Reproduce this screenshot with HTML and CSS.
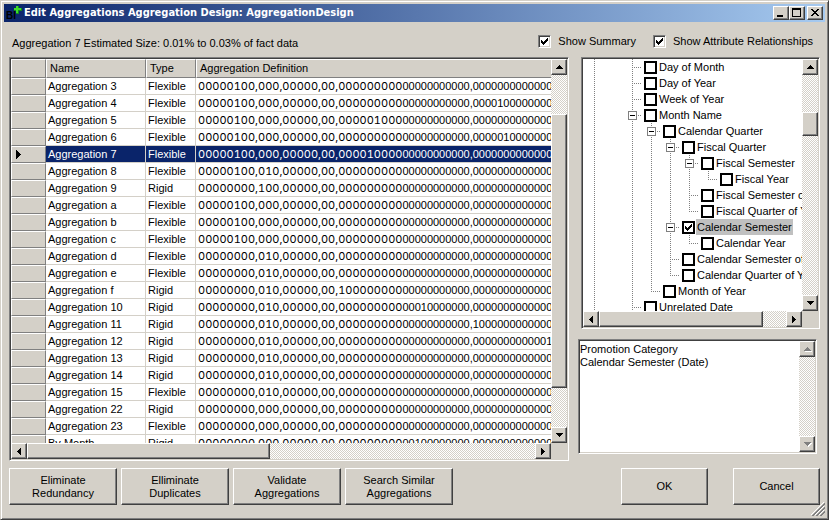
FILE: index.html
```html
<!DOCTYPE html>
<html lang="en">
<head>
<meta charset="utf-8">
<title>Edit Aggregations</title>
<link rel="stylesheet" href="styles.css">
</head>
<body>
<svg class="defs" aria-hidden="true">
  <symbol id="up" viewBox="0 0 7 4"><path d="M3 0h1v1h1v1h1v1h1v1H0V3h1V2h1V1h1z"/></symbol>
  <symbol id="down" viewBox="0 0 7 4"><path d="M0 0h7v1H6v1H5v1H4v1H3V3H2V2H1V1H0z"/></symbol>
  <symbol id="left" viewBox="0 0 4 7"><path d="M3 0h1v7H3V6H2V5H1V4H0V3h1V2h1V1h1z"/></symbol>
  <symbol id="right" viewBox="0 0 4 7"><path d="M0 0h1v1h1v1h1v1h1v1H3v1H2v1H1v1H0z"/></symbol>
  <symbol id="marker" viewBox="0 0 5 9"><path d="M0 0h1v1h1v1h1v1h1v1h1v1H4v1H3v1H2v1H1v1H0z"/></symbol>
</svg>
<div class="window">
  <header class="titlebar">
    <svg class="app-icon" viewBox="0 0 16 16" aria-hidden="true">
      <text x="0" y="14" class="app-letters">BI</text>
      <path d="M10 1h3v2h3v3h-3v3h-3V6H8V3h2z" fill="#128c1c"/>
      <path d="M10 1h2v2h3v2h-3v3h-2V5H8V3h2z" fill="#3fdc2c"/>
    </svg>
    <h1>Edit Aggregations Aggregation Design: AggregationDesign</h1>
    <div class="caption-buttons">
      <button class="cap" aria-label="Minimize"><svg viewBox="0 0 12 10"><path d="M2 7h6v2H2z"/></svg></button>
      <button class="cap" aria-label="Maximize"><svg viewBox="0 0 12 10"><path fill-rule="evenodd" d="M1 0h9v9H1zM2 2v6h7V2z"/></svg></button>
      <button class="cap close" aria-label="Close"><svg viewBox="0 0 12 10"><path d="M2 1h2v1h1v1h2V2h1V1h2v1H9v1H8v1H7v1h1v1h1v1h1v1H8V7H7V6H5v1H4v1H2V7h1V6h1V5h1V4H4V3H3V2H2z"/></svg></button>
    </div>
  </header>

  <div class="options">
    <p class="size">Aggregation 7 Estimated Size: 0.01% to 0.03% of fact data</p>
    <label class="option"><input type="checkbox" class="check" checked>Show Summary</label>
    <label class="option"><input type="checkbox" class="check" checked>Show Attribute Relationships</label>
  </div>

  <main class="main">
    <section class="panel grid-panel">
      <div class="view">
        <table class="grid">
          <colgroup><col class="c-mark"><col class="c-name"><col class="c-type"><col></colgroup>
          <thead><tr><th></th><th>Name</th><th>Type</th><th>Aggregation Definition</th></tr></thead>
          <tbody id="rows"></tbody>
        </table>
      </div>
      <div class="bar vertical">
        <button class="arrow" aria-label="Scroll up"><svg class="a-v"><use href="#up"/></svg></button>
        <div class="track grid-v"><div class="thumb"></div></div>
        <button class="arrow" aria-label="Scroll down"><svg class="a-v"><use href="#down"/></svg></button>
      </div>
      <div class="bar horizontal">
        <button class="arrow" aria-label="Scroll left"><svg class="a-h"><use href="#left"/></svg></button>
        <div class="track grid-h"><div class="thumb"></div></div>
        <button class="arrow" aria-label="Scroll right"><svg class="a-h"><use href="#right"/></svg></button>
      </div>
    </section>

    <div class="side">
      <section class="panel tree-panel">
        <div class="view"><ul class="tree" id="tree"></ul></div>
        <div class="bar vertical">
          <button class="arrow" aria-label="Scroll up"><svg class="a-v"><use href="#up"/></svg></button>
          <div class="track tree-v"><div class="thumb"></div></div>
          <button class="arrow" aria-label="Scroll down"><svg class="a-v"><use href="#down"/></svg></button>
        </div>
        <div class="bar horizontal">
          <button class="arrow" aria-label="Scroll left"><svg class="a-h"><use href="#left"/></svg></button>
          <div class="track tree-h"><div class="thumb"></div></div>
          <button class="arrow" aria-label="Scroll right"><svg class="a-h"><use href="#right"/></svg></button>
        </div>
      </section>
      <section class="panel summary-panel">
        <textarea class="summary" aria-label="Summary">Promotion Category
Calendar Semester (Date)</textarea>
        <div class="bar vertical">
          <button class="arrow" disabled aria-label="Scroll up"><svg class="a-v"><use href="#up"/></svg></button>
          <div class="track"></div>
          <button class="arrow" disabled aria-label="Scroll down"><svg class="a-v"><use href="#down"/></svg></button>
        </div>
      </section>
    </div>
  </main>

  <footer class="footer">
    <button class="button">Eliminate<br>Redundancy</button>
    <button class="button">Elliminate<br>Duplicates</button>
    <button class="button">Validate<br>Aggregations</button>
    <button class="button">Search Similar<br>Aggregations</button>
    <div class="confirm">
      <button class="button small">OK</button>
      <button class="button small">Cancel</button>
    </div>
  </footer>
  <svg class="grip" viewBox="0 0 14 14" aria-hidden="true">
    <path d="M0 13L13 0M4 13l9-9M8 13l5-5" stroke="#fff"/>
    <path d="M1 14L14 1M2 14L14 2M5 14l9-9M6 14l8-8M9 14l5-5M10 14l4-4" stroke="#808080"/>
  </svg>
</div>
<script src="script.js"></script>
</body>
</html>
```
FILE: styles.css
```css
* { box-sizing: border-box; }

:root {
  --face: #d4d0c8;
  --shadow: #808080;
  --dark: #404040;
  --navy: #0a246a;
}

body {
  margin: 0;
  background: var(--face);
  color: #000;
  font: 11px/13px "Liberation Sans", Arial, sans-serif;
}

button, textarea { font: inherit; color: inherit; }
svg { display: block; fill: #000; shape-rendering: crispEdges; }
.defs { position: absolute; width: 0; height: 0; }

.window {
  position: relative;
  display: flex;
  flex-direction: column;
  height: 100vh;
  padding: 2px;
  border: 1px solid;
  border-color: var(--face) var(--dark) var(--dark) var(--face);
  box-shadow: inset 1px 1px #fff, inset -1px -1px var(--shadow);
}

/* Title bar */
.titlebar {
  display: flex;
  align-items: center;
  flex: none;
  height: 18px;
  margin: 1px 1px 0;
  padding: 0 2px;
  background: linear-gradient(90deg, var(--navy), #a6caf0);
}
.app-icon { width: 16px; height: 16px; margin-right: 2px; }
.app-letters { font: bold 10px "Liberation Sans", sans-serif; fill: #000; }
.titlebar h1 {
  flex: 1;
  margin: 0;
  color: #fff;
  font: bold 11px/18px "DejaVu Sans Condensed", "DejaVu Sans", sans-serif;
  white-space: nowrap;
}
.caption-buttons { display: flex; }
.cap, .arrow, .thumb, .button {
  background: var(--face);
  border: 1px solid;
  border-color: #fff var(--dark) var(--dark) #fff;
  border-radius: 0;
  box-shadow: inset -1px -1px var(--shadow);
}
.cap { width: 16px; height: 14px; padding: 1px; }
.cap svg { width: 12px; height: 10px; }
.close { margin-left: 2px; }

/* Options row */
.options {
  display: flex;
  align-items: center;
  flex: none;
  height: 35px;
  padding: 4px 13px 0 9px;
}
.size { flex: 1; margin: 4px 0 0; }
.option { display: flex; align-items: center; height: 14px; margin-left: 17px; }
.check {
  appearance: none;
  width: 13px;
  height: 13px;
  margin: 0 7px 0 0;
  background: #fff;
  border: 1px solid;
  border-color: var(--shadow) #fff #fff var(--shadow);
  box-shadow: inset 1px 1px var(--dark), inset -1px -1px var(--face);
}
.check:checked, .node-check:checked {
  background: #fff url("data:image/svg+xml,%3Csvg xmlns='http://www.w3.org/2000/svg' viewBox='0 0 7 7' shape-rendering='crispEdges'%3E%3Cpath d='M0 2h1v1h1v1h1V3h1V2h1V1h1V0h1v3H6v1H5v1H4v1H3v1H2V6H1V5H0z'/%3E%3C/svg%3E") center / 7px 7px no-repeat;
}

/* Panels */
.main { display: flex; flex: 1; min-height: 0; gap: 9px; padding: 0 6px; }
.side { display: flex; flex-direction: column; flex: 0 0 242px; gap: 10px; }
.panel {
  display: grid;
  grid-template: minmax(0, 1fr) 16px / minmax(0, 1fr) 16px;
  padding: 1px;
  border: 1px solid;
  border-color: var(--shadow) #fff #fff var(--shadow);
  box-shadow: inset 1px 1px var(--dark), inset -1px -1px var(--face);
}
.grid-panel { flex: 1; min-width: 0; }
.tree-panel { flex: 1; min-height: 0; margin-left: 3px; }
.summary-panel {
  flex: none;
  height: 115px;
  margin: 0 3px 7px 0;
  grid-template-rows: minmax(0, 1fr);
}
.view { overflow: hidden; background: #fff; }

/* Scroll bars */
.bar { display: flex; }
.vertical { flex-direction: column; }
.track {
  display: flex;
  flex: 1;
  flex-direction: inherit;
  background: conic-gradient(#fff 25%, var(--face) 0 50%, #fff 0 75%, var(--face) 0) 0 0 / 2px 2px;
}
.track::before, .track::after { content: ""; flex: 0 1 0; }
.grid-v::before { flex-grow: 39; }
.grid-v .thumb { flex-grow: 274; }
.grid-v::after { flex-grow: 39; }
.grid-h .thumb { flex-grow: 242; }
.grid-h::after { flex-grow: 266; }
.tree-v::before { flex-grow: 38; }
.tree-v .thumb { flex-grow: 22; }
.tree-v::after { flex-grow: 161; }
.tree-h .thumb { flex-grow: 165; }
.tree-h::after { flex-grow: 23; }
.arrow {
  display: flex;
  align-items: center;
  justify-content: center;
  flex: none;
  width: 16px;
  height: 16px;
  padding: 0;
}
.arrow:disabled svg { fill: var(--shadow); filter: drop-shadow(1px 1px #fff); }
.a-v { width: 7px; height: 4px; }
.a-h { width: 4px; height: 7px; }
.row-marker { width: 5px; height: 9px; }

/* Aggregation table */
.grid { width: 100%; table-layout: fixed; border-collapse: separate; border-spacing: 0; }
.c-mark { width: 35px; }
.c-name { width: 100px; }
.c-type { width: 50px; }
.grid th {
  height: 19px;
  padding: 0 0 0 3px;
  background: var(--face);
  border: 1px solid;
  border-color: #fff var(--shadow) var(--shadow) #fff;
  font-weight: normal;
  text-align: left;
  white-space: nowrap;
}
.grid td {
  height: 17px;
  padding: 1px 0 0 2px;
  border: solid var(--face);
  border-width: 0 1px 1px 0;
  line-height: 15px;
  white-space: nowrap;
  overflow: hidden;
}
.grid tbody th { height: 17px; padding: 0 0 0 4px; }
.grid tr > :last-child { border-right: 0; }
.grid .selected td { background: var(--navy); color: #fff; }
.wide { font-family: Inter, sans-serif; font-variant-numeric: tabular-nums; }

/* Attribute tree */
.tree { margin: 0; padding: 0 0 0 2px; list-style: none; }
.tree li { display: flex; align-items: center; height: 16px; white-space: nowrap; }
.guide {
  display: grid;
  flex: none;
  place-items: center;
  width: 19px;
  height: 16px;
  --v: repeating-linear-gradient(var(--shadow) 0 1px, #fff 0 2px) 9px 0;
  --h: repeating-linear-gradient(90deg, var(--shadow) 0 1px, #fff 0 2px) 9px 8px;
}
.line { background: var(--v) / 1px 16px no-repeat; }
.tee { background: var(--v) / 1px 16px no-repeat, var(--h) / 10px 1px no-repeat; }
.end { background: var(--v) / 1px 8px no-repeat, var(--h) / 10px 1px no-repeat; }
.fold {
  width: 9px;
  height: 9px;
  margin-top: 1px;
  padding: 0;
  border: 1px solid var(--shadow);
  background: linear-gradient(#000 0 0) center / 5px 1px no-repeat #fff;
}
.node-check {
  appearance: none;
  flex: none;
  width: 13px;
  height: 13px;
  margin: 1px 1px 0 2px;
  background: #fff;
  border: 2px solid #000;
}
.tree label { height: 16px; padding: 0 1px; line-height: 16px; }
.tree .current { background: #c0c0c0; }

.summary {
  width: 100%;
  height: 100%;
  margin: 0;
  padding: 2px 0 0;
  border: 0;
  background: #fff;
  overflow: hidden;
  resize: none;
  outline: none;
}

/* Bottom buttons */
.footer { display: flex; flex: none; gap: 4px; padding: 7px 6px 12px; }
.button { width: 108px; height: 37px; padding: 0; }
.confirm { display: flex; gap: 25px; margin-left: auto; }
.small { width: 87px; }
.grip { position: absolute; right: 3px; bottom: 3px; width: 14px; height: 14px; shape-rendering: auto; }
```
FILE: script.js
```js
const zeros = n => "0".repeat(n);
// A run of n digits with a single 1 at the given position (0 for none).
const bits = (n, one) => one ? zeros(one - 1) + "1" + zeros(n - one) : zeros(n);

// name, type, first group, second group, position of the 1 in the long groups
const aggregations = [
  ["Aggregation 3", "Flexible", 6, 0, 0, 0],
  ["Aggregation 4", "Flexible", 6, 0, 0, 5],
  ["Aggregation 5", "Flexible", 6, 0, 6, 0],
  ["Aggregation 6", "Flexible", 6, 0, 0, 6],
  ["Aggregation 7", "Flexible", 6, 0, 5, 0],
  ["Aggregation 8", "Flexible", 6, 2, 0, 0],
  ["Aggregation 9", "Rigid", 0, 1, 0, 0],
  ["Aggregation a", "Flexible", 6, 0, 0, 0],
  ["Aggregation b", "Flexible", 6, 0, 0, 0],
  ["Aggregation c", "Flexible", 6, 0, 0, 0],
  ["Aggregation d", "Flexible", 0, 2, 0, 0],
  ["Aggregation e", "Flexible", 0, 2, 0, 0],
  ["Aggregation f", "Rigid", 0, 2, 1, 0],
  ["Aggregation 10", "Rigid", 0, 2, 13, 0],
  ["Aggregation 11", "Rigid", 0, 2, 0, 1],
  ["Aggregation 12", "Rigid", 0, 2, 0, 13],
  ["Aggregation 13", "Rigid", 0, 2, 0, 0],
  ["Aggregation 14", "Rigid", 0, 2, 0, 0],
  ["Aggregation 15", "Flexible", 0, 2, 0, 0],
  ["Aggregation 22", "Rigid", 0, 0, 0, 0],
  ["Aggregation 23", "Flexible", 0, 0, 0, 0],
  ["By Month", "Rigid", 0, 0, 12, 0]
];

document.getElementById("rows").innerHTML = aggregations.map(([name, type, a, b, c, d]) => {
  const selected = name === "Aggregation 7";
  const long = bits(20, c);
  const lead = `${bits(8, a)},${bits(3, b)},00000,00,${long.slice(0, 9)}`;
  const marker = selected ? '<svg class="row-marker"><use href="#marker"/></svg>' : "";
  return `<tr${selected ? ' class="selected"' : ""}><th>${marker}</th><td>${name}</td><td>${type}</td>` +
    `<td><span class="wide">${lead}</span>${long.slice(9)},${bits(14, d)}</td></tr>`;
}).join("");

// Guides: | line, . blank, t tee, e end, + tee with a fold button
const nodes = [
  ["|.t", "Day of Month"],
  ["|.t", "Day of Year"],
  ["|.t", "Week of Year"],
  ["|.+", "Month Name"],
  ["|.|+", "Calendar Quarter"],
  ["|.||+", "Fiscal Quarter"],
  ["|.|||+", "Fiscal Semester"],
  ["|.||||e", "Fiscal Year"],
  ["|.|||t", "Fiscal Semester of Year"],
  ["|.|||e", "Fiscal Quarter of Year"],
  ["|.||+", "Calendar Semester"],
  ["|.|||e", "Calendar Year"],
  ["|.||t", "Calendar Semester of Year"],
  ["|.||e", "Calendar Quarter of Year"],
  ["|.|e", "Month of Year"],
  ["|.t", "Unrelated Date"]
];
const guides = { "|": "line", ".": "", t: "tee", e: "end", "+": "tee" };

document.getElementById("tree").innerHTML = nodes.map(([path, text], i) => {
  const cells = [...path].map(g =>
    `<span class="guide ${guides[g]}">${g === "+" ? '<button class="fold" aria-label="Collapse"></button>' : ""}</span>`
  ).join("");
  const current = text === "Calendar Semester";
  return `<li>${cells}<input type="checkbox" class="node-check" id="node${i}"${current ? " checked" : ""}>` +
    `<label for="node${i}"${current ? ' class="current"' : ""}>${text}</label></li>`;
}).join("");
```
